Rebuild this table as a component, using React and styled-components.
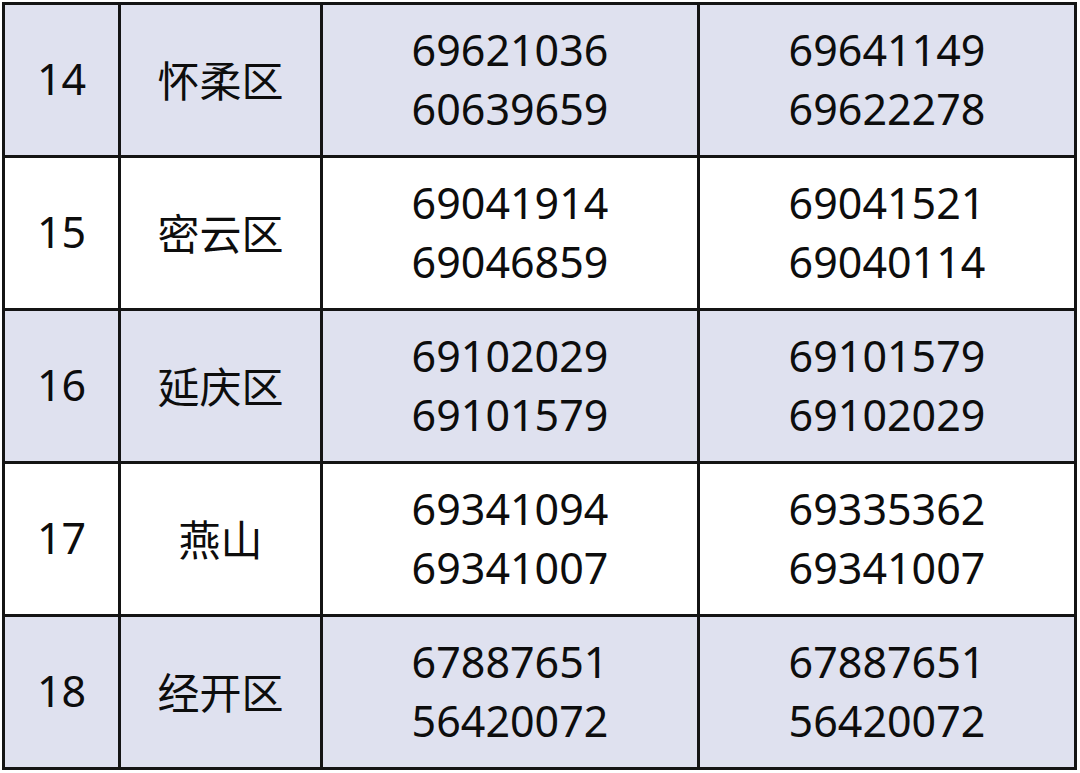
import React from "react";
import styled, { createGlobalStyle } from "styled-components";

const GlobalStyle = createGlobalStyle`
  html, body {
    margin: 0;
    padding: 0;
    background: #ffffff;
  }
  body {
    font-family: "Noto Sans", "Noto Sans CJK SC", sans-serif;
  }
`;

const Page = styled.div`
  width: 1080px;
  height: 773px;
  padding: 2px 0 0 2px;
  box-sizing: border-box;
`;

const Grid = styled.div`
  display: grid;
  grid-template-columns: 113px 199px 374px 374px;
  grid-auto-rows: 150px;
  gap: 3px;
  padding: 3px;
  width: max-content;
  background: #141414;
`;

const Cell = styled.div`
  display: flex;
  flex-direction: column;
  align-items: center;
  justify-content: center;
  padding-bottom: 3px;
  box-sizing: border-box;
  background: ${(p) => (p.$shaded ? "#dfe1ef" : "#ffffff")};
  color: #0d0d0d;
  font-size: ${(p) => (p.$cjk ? "42px" : "43px")};
  line-height: 59px;
  font-family: ${(p) =>
    p.$cjk
      ? '"Noto Sans CJK SC", "Noto Sans", sans-serif'
      : '"Noto Sans", "Noto Sans CJK SC", sans-serif'};
`;

const rows = [
  { no: "14", name: "怀柔区", a: ["69621036", "60639659"], b: ["69641149", "69622278"] },
  { no: "15", name: "密云区", a: ["69041914", "69046859"], b: ["69041521", "69040114"] },
  { no: "16", name: "延庆区", a: ["69102029", "69101579"], b: ["69101579", "69102029"] },
  { no: "17", name: "燕山", a: ["69341094", "69341007"], b: ["69335362", "69341007"] },
  { no: "18", name: "经开区", a: ["67887651", "56420072"], b: ["67887651", "56420072"] },
];

export default function App() {
  return (
    <Page>
      <GlobalStyle />
      <Grid>
        {rows.map((r, i) => {
          const shaded = i % 2 === 0;
          return (
            <React.Fragment key={r.no}>
              <Cell $shaded={shaded}>{r.no}</Cell>
              <Cell $shaded={shaded} $cjk>{r.name}</Cell>
              <Cell $shaded={shaded}>
                {r.a.map((n, j) => (
                  <span key={j}>{n}</span>
                ))}
              </Cell>
              <Cell $shaded={shaded}>
                {r.b.map((n, j) => (
                  <span key={j}>{n}</span>
                ))}
              </Cell>
            </React.Fragment>
          );
        })}
      </Grid>
    </Page>
  );
}
